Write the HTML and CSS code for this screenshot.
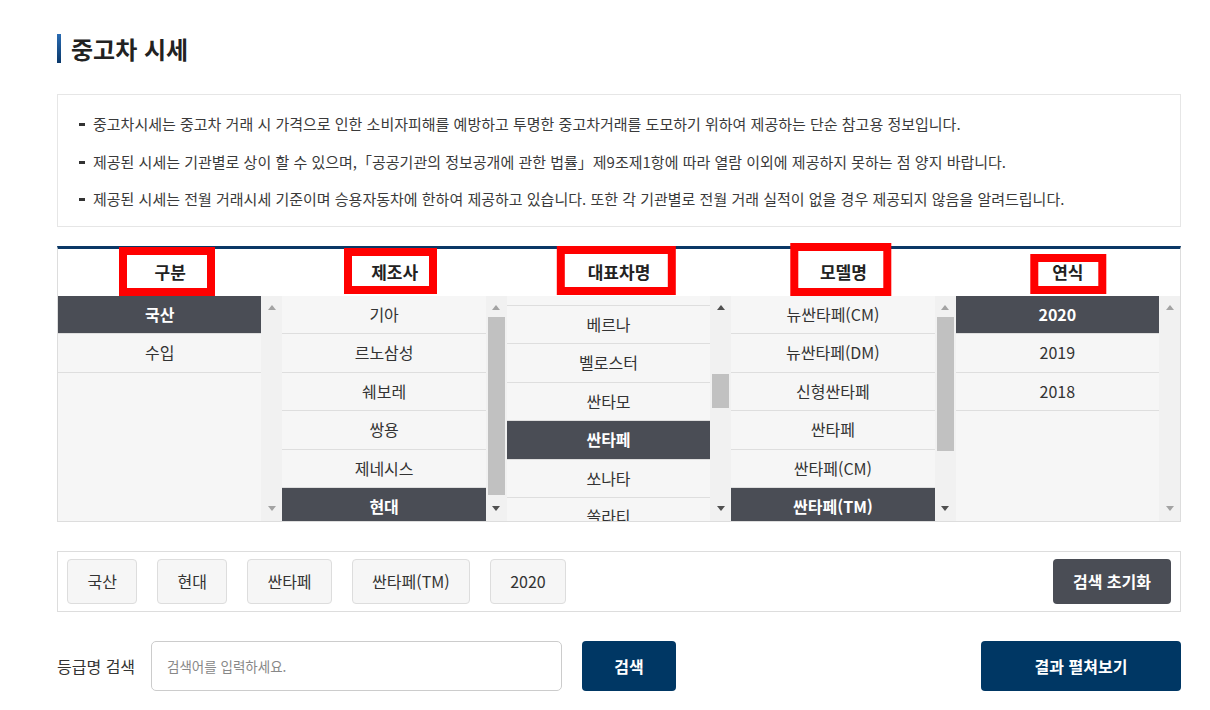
FILE: index.html
```html
<!DOCTYPE html>
<html lang="ko">
<head>
<meta charset="utf-8">
<title>중고차 시세</title>
<link rel="stylesheet" href="styles.css">
</head>
<body>
<div class="page">
  <h2 class="page-title">중고차 시세</h2>

  <div class="notice">
    <ul class="notice-list">
      <li>중고차시세는 중고차 거래 시 가격으로 인한 소비자피해를 예방하고 투명한 중고차거래를 도모하기 위하여 제공하는 단순 참고용 정보입니다.</li>
      <li>제공된 시세는 기관별로 상이 할 수 있으며,「공공기관의 정보공개에 관한 법률」제9조제1항에 따라 열람 이외에 제공하지 못하는 점 양지 바랍니다.</li>
      <li>제공된 시세는 전월 거래시세 기준이며 승용자동차에 한하여 제공하고 있습니다. 또한 각 기관별로 전월 거래 실적이 없을 경우 제공되지 않음을 알려드립니다.</li>
    </ul>
  </div>

  <div class="picker">
    <div class="col">
      <div class="col-head"><span class="head-label head-label--kind">구분</span></div>
      <div class="col-body">
        <div class="list">
          <div class="item is-on">국산</div>
          <div class="item">수입</div>
        </div>
        <div class="sbar">
          <div class="sbar-btn sbar-btn--up"><span class="arrow arrow--up"></span></div>
          <div class="sbar-trough"></div>
          <div class="sbar-btn sbar-btn--down"><span class="arrow arrow--down"></span></div>
        </div>
      </div>
    </div>

    <div class="col">
      <div class="col-head"><span class="head-label head-label--maker">제조사</span></div>
      <div class="col-body">
        <div class="list">
          <div class="item">기아</div>
          <div class="item">르노삼성</div>
          <div class="item">쉐보레</div>
          <div class="item">쌍용</div>
          <div class="item">제네시스</div>
          <div class="item is-on">현대</div>
        </div>
        <div class="sbar">
          <div class="sbar-btn sbar-btn--up"><span class="arrow arrow--up"></span></div>
          <div class="sbar-trough"><div class="thumb" style="margin-top:0px;height:178px"></div></div>
          <div class="sbar-btn sbar-btn--down"><span class="arrow arrow--down arrow--active"></span></div>
        </div>
      </div>
    </div>

    <div class="col">
      <div class="col-head"><span class="head-label head-label--car">대표차명</span></div>
      <div class="col-body">
        <div class="list">
          <div class="item item--clipped"></div>
          <div class="item">베르나</div>
          <div class="item">벨로스터</div>
          <div class="item">싼타모</div>
          <div class="item is-on">싼타페</div>
          <div class="item">쏘나타</div>
          <div class="item">쏠라티</div>
        </div>
        <div class="sbar">
          <div class="sbar-btn sbar-btn--up"><span class="arrow arrow--up arrow--active"></span></div>
          <div class="sbar-trough"><div class="thumb" style="margin-top:56.5px;height:34px"></div></div>
          <div class="sbar-btn sbar-btn--down"><span class="arrow arrow--down arrow--active"></span></div>
        </div>
      </div>
    </div>

    <div class="col">
      <div class="col-head"><span class="head-label head-label--model">모델명</span></div>
      <div class="col-body">
        <div class="list">
          <div class="item">뉴싼타페(CM)</div>
          <div class="item">뉴싼타페(DM)</div>
          <div class="item">신형싼타페</div>
          <div class="item">싼타페</div>
          <div class="item">싼타페(CM)</div>
          <div class="item is-on">싼타페(TM)</div>
        </div>
        <div class="sbar">
          <div class="sbar-btn sbar-btn--up"><span class="arrow arrow--up"></span></div>
          <div class="sbar-trough"><div class="thumb" style="margin-top:0px;height:133.5px"></div></div>
          <div class="sbar-btn sbar-btn--down"><span class="arrow arrow--down arrow--active"></span></div>
        </div>
      </div>
    </div>

    <div class="col">
      <div class="col-head"><span class="head-label head-label--year">연식</span></div>
      <div class="col-body">
        <div class="list">
          <div class="item is-on">2020</div>
          <div class="item">2019</div>
          <div class="item">2018</div>
        </div>
        <div class="sbar">
          <div class="sbar-btn sbar-btn--up"><span class="arrow arrow--up"></span></div>
          <div class="sbar-trough"></div>
          <div class="sbar-btn sbar-btn--down"><span class="arrow arrow--down"></span></div>
        </div>
      </div>
    </div>
  </div>

  <div class="chosen">
    <span class="chip">국산</span>
    <span class="chip">현대</span>
    <span class="chip">싼타페</span>
    <span class="chip">싼타페(TM)</span>
    <span class="chip">2020</span>
    <button class="btn-reset" type="button">검색 초기화</button>
  </div>

  <div class="search-row">
    <label class="search-label" for="grade">등급명 검색</label>
    <input class="search-input" id="grade" type="text" placeholder="검색어를 입력하세요.">
    <button class="btn-navy btn-search" type="button">검색</button>
    <button class="btn-navy btn-expand" type="button">결과 펼쳐보기</button>
  </div>
</div>
</body>
</html>
```
FILE: styles.css
```css
*, *::before, *::after { box-sizing: border-box; }

html, body {
  margin: 0;
  padding: 0;
  background: #fff;
}

body {
  font-family: "Noto Sans CJK KR", "Noto Sans", sans-serif;
  color: #333;
}

.page {
  width: 1181px;
  padding: 34px 0 0 57px;
}

/* Title */
.page-title {
  display: flex;
  align-items: center;
  margin: 0;
  height: 29px;
  font-size: 24px;
  line-height: 29px;
  font-weight: 700;
  color: #222;
}
.page-title::before {
  content: "";
  display: block;
  width: 4px;
  height: 29px;
  margin-right: 10px;
  background: linear-gradient(#2a6cb3, #0a386a);
}

/* Notice */
.notice {
  margin-top: 31px;
  border: 1px solid #e6e6e6;
  padding: 10px 0 8.5px 21px;
}
.notice-list {
  list-style: none;
  margin: 0;
  padding: 0;
}
.notice-list li {
  font-size: 15px;
  line-height: 37.5px;
  height: 37.5px;
  color: #3a3a3a;
  white-space: nowrap;
}
.notice-list li::before {
  content: "";
  display: inline-block;
  width: 6px;
  height: 3px;
  margin-right: 8px;
  background: #333;
  vertical-align: middle;
  position: relative;
  top: -1px;
}

/* Picker table */
.picker {
  margin-top: 19px;
  display: flex;
  border: 1px solid #ddd;
  border-top: 3px solid #0b3866;
}
.col {
  flex: 1 1 0;
  min-width: 0;
  display: flex;
  flex-direction: column;
}
.col-head {
  height: 46.5px;
  display: flex;
  align-items: center;
  justify-content: center;
  background: #fff;
}
.head-label {
  position: relative;
  font-size: 17px;
  font-weight: 700;
  color: #222;
  line-height: 22px;
}
.head-label::after {
  content: "";
  position: absolute;
  left: 50%;
  top: 50%;
  width: var(--w);
  height: var(--h);
  border: 8px solid #ff0000;
  transform: translate(calc(-50% + var(--dx)), calc(-50% + var(--dy)));
  z-index: 2;
}
.head-label--kind  { --w: 96px;  --h: 49px; --dx: -3px;   --dy: -0.5px; }
.head-label--maker { --w: 93px;  --h: 46px; --dx: -4.5px; --dy: -1px; }
.head-label--car   { --w: 119px; --h: 49px; --dx: -2.7px; --dy: -1.5px; }
.head-label--model { --w: 101px; --h: 53px; --dx: -2.2px; --dy: -2.5px; }
.head-label--year  { --w: 76px;  --h: 40px; --dx: 0.3px;  --dy: 2px; }

.col-body {
  height: 225.5px;
  display: flex;
}
.list {
  flex: 1 1 0;
  min-width: 0;
  overflow: hidden;
  background: #f6f6f6;
}
.item {
  height: 38.5px;
  border-bottom: 1px solid #dedede;
  font-size: 16px;
  line-height: 37.5px;
  text-align: center;
  color: #333;
  white-space: nowrap;
}
.item.is-on {
  background: #4a4d55;
  color: #fff;
  font-weight: 700;
}
.item--clipped {
  margin-top: -28.5px;
}

/* Scrollbar drawing */
.sbar {
  width: 21px;
  flex: 0 0 21px;
  display: flex;
  flex-direction: column;
  background: #f1f1f1;
}
.sbar-btn {
  height: 21.5px;
  display: flex;
  justify-content: center;
  align-items: flex-start;
}
.sbar-btn--up { padding-top: 9.5px; }
.sbar-btn--down { padding-top: 6px; }
.sbar-trough {
  flex: 1 1 0;
}
.thumb {
  width: 17px;
  margin-left: 2px;
  background: #c1c1c1;
}
.arrow {
  display: block;
  width: 0;
  height: 0;
  border-left: 4.5px solid transparent;
  border-right: 4.5px solid transparent;
}
.arrow--up { border-bottom: 5px solid #a3a3a3; }
.arrow--down { border-top: 5px solid #a3a3a3; }
.arrow--up.arrow--active { border-bottom-color: #505050; }
.arrow--down.arrow--active { border-top-color: #505050; }

/* Chosen chips */
.chosen {
  margin-top: 28.5px;
  border: 1px solid #ddd;
  padding: 7px 9px 7px 9px;
  display: flex;
  align-items: center;
  gap: 19.5px;
}
.chip {
  height: 45px;
  padding: 0 19.5px;
  display: flex;
  align-items: center;
  border: 1px solid #ddd;
  border-radius: 4px;
  background: #f6f6f6;
  font-size: 16px;
  color: #333;
  white-space: nowrap;
}
.btn-reset {
  margin-left: auto;
  height: 45px;
  padding: 0 20px;
  border: 0;
  border-radius: 4px;
  background: #4a4d55;
  color: #fff;
  font-family: inherit;
  font-size: 16px;
  font-weight: 700;
  white-space: nowrap;
}

/* Search row */
.search-row {
  margin-top: 29px;
  display: flex;
  align-items: center;
}
.search-label {
  width: 94px;
  font-size: 16px;
  color: #333;
  white-space: nowrap;
}
.search-input {
  width: 411px;
  height: 50px;
  padding: 0 15px;
  border: 1px solid #ccc;
  border-radius: 5px;
  font-family: inherit;
  font-size: 13.5px;
  color: #333;
  outline: none;
}
.search-input::placeholder {
  color: #888;
}
.btn-navy {
  height: 50px;
  border: 0;
  border-radius: 4px;
  background: #003764;
  color: #fff;
  font-family: inherit;
  font-size: 16px;
  font-weight: 700;
  white-space: nowrap;
}
.btn-search {
  width: 94px;
  margin-left: 20px;
}
.btn-expand {
  width: 200px;
  margin-left: auto;
}
```
